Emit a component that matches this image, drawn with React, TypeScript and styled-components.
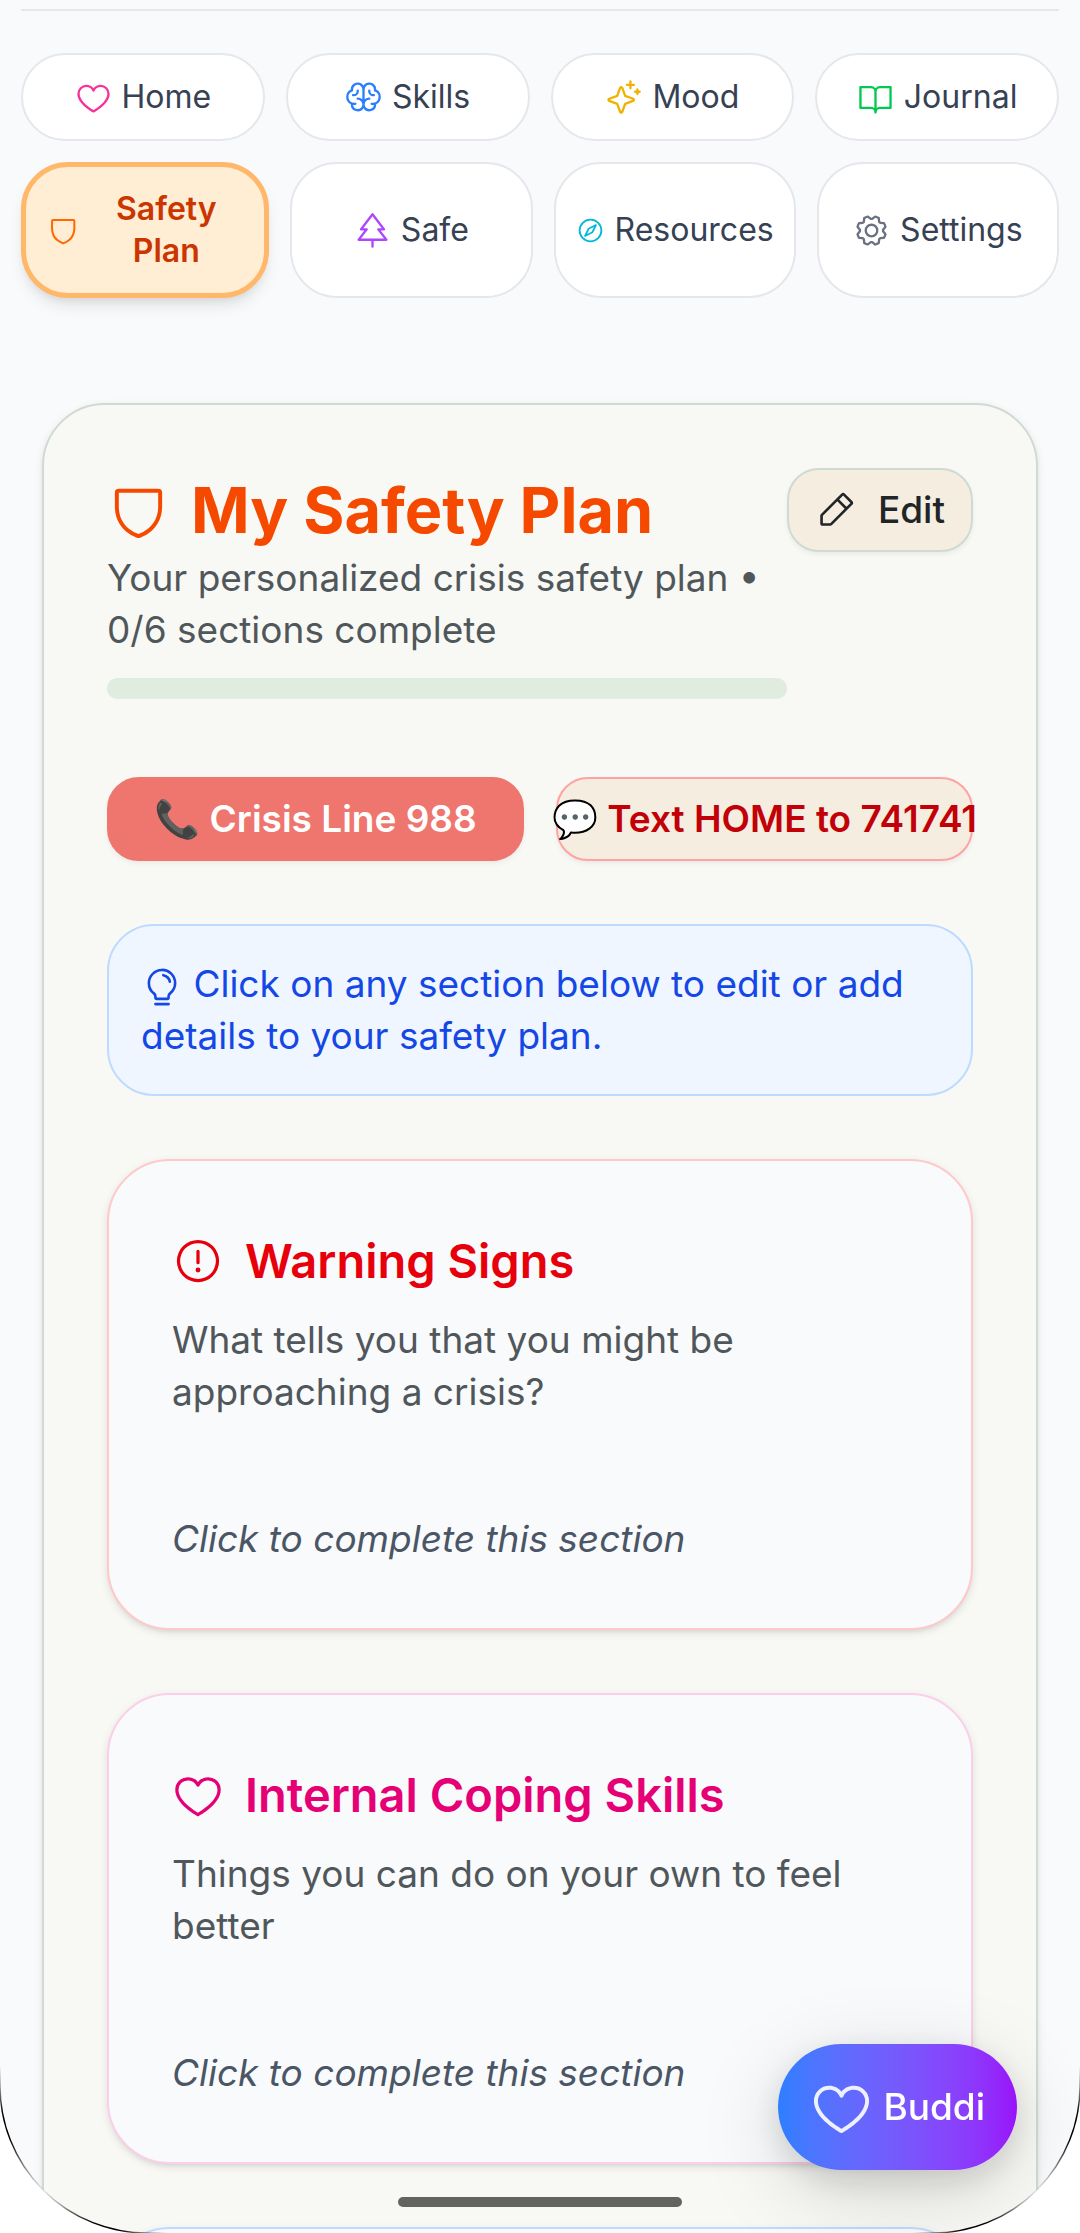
import React from 'react';
import styled, { createGlobalStyle, css } from 'styled-components';
import type { IconType } from 'react-icons';
import {
  PiBookOpen,
  PiBrain,
  PiCompass,
  PiGear,
  PiHeart,
  PiLightbulb,
  PiPencilSimple,
  PiShield,
  PiSparkle,
  PiTreeEvergreen,
  PiWarningCircle,
} from 'react-icons/pi';

const GlobalStyle = createGlobalStyle`
  *, *::before, *::after { box-sizing: border-box; }
  html { background: #ffffff; }
  body {
    margin: 0;
    background: #f9fafc;
    color: #1f2528;
    font-family: Inter, "Liberation Sans", sans-serif;
    font-size: 37px;
    line-height: 52px;
  }
  h1, h2, p { margin: 0; }
  button { font: inherit; color: inherit; cursor: pointer; }
`;

const Screen = styled.div`
  height: 100vh;
  overflow: hidden;
`;

const TopBar = styled.header`
  margin: 0 21px;
  padding-top: 9px;
  border-bottom: 2px solid #e5e7eb;
`;

const Nav = styled.nav`
  display: grid;
  gap: 21px;
  padding: 42px 21px 0;
`;

const NavRow = styled.div`
  display: flex;
  gap: 21px;
`;

const NavButton = styled.button<{ $active?: boolean }>`
  flex: 1 1 0;
  min-width: 0;
  display: flex;
  align-items: center;
  justify-content: center;
  gap: 10px;
  padding: 21px;
  border: 2px solid #e5e7eb;
  border-radius: 47px;
  background: #ffffff;
  color: #364153;
  font-size: 32px;
  line-height: 42px;

  ${({ $active }) =>
    $active &&
    css`
      border: 5px solid #ffb86a;
      background: #ffedd4;
      color: #ca3500;
      font-weight: 600;
      box-shadow: 0 10px 16px -3px rgba(0, 0, 0, 0.1), 0 5px 10px -5px rgba(0, 0, 0, 0.1);
    `}
`;

const NavIcon = styled.span<{ $color: string }>`
  display: flex;
  flex: 0 1 37px;
  min-width: 29px;
  color: ${({ $color }) => $color};

  svg {
    width: 100%;
    height: auto;
  }
`;

const Main = styled.main`
  padding: 105px 42px 0;
`;

const PlanCard = styled.section`
  display: grid;
  gap: 63px;
  padding: 63px;
  border: 2px solid #cfdbd2;
  border-radius: 63px;
  background: #f8f9f4;
  box-shadow: 0 3px 8px rgba(0, 0, 0, 0.1), 0 3px 5px -3px rgba(0, 0, 0, 0.1);
`;

const PlanHeader = styled.div`
  display: flex;
  align-items: flex-start;
  padding-bottom: 15px;
`;

const PlanSummary = styled.div`
  flex: 1;
  min-width: 0;
`;

const PlanTitle = styled.h1`
  display: flex;
  align-items: center;
  gap: 21px;
  color: #f54900;
  font-size: 63px;
  font-weight: 700;
  line-height: 84px;
`;

const Muted = styled.p`
  color: #50575b;
`;

const Progress = styled.div`
  height: 21px;
  margin-top: 22px;
  border-radius: 10px;
  background: #e1ece0;
  overflow: hidden;
`;

const ProgressFill = styled.div`
  height: 100%;
  background: #7fb08a;
`;

const Button = styled.button<{ $tone?: 'solid' | 'danger' }>`
  display: flex;
  align-items: center;
  justify-content: center;
  height: 84px;
  padding: 0 26px;
  border: 2px solid #cfdbd2;
  border-radius: 32px;
  background: #f5ede0;
  font-weight: 500;
  white-space: nowrap;
  box-shadow: 0 3px 5px rgba(0, 0, 0, 0.05);

  svg {
    margin-right: 21px;
  }

  ${({ $tone }) =>
    $tone === 'solid' &&
    css`
      border-color: #ee766e;
      background: #ee766e;
      color: #ffffff;
      font-weight: 600;
    `}

  ${({ $tone }) =>
    $tone === 'danger' &&
    css`
      border-color: #ffa2a2;
      color: #c10007;
      font-weight: 600;
    `}
`;

const CrisisRow = styled.div`
  display: grid;
  grid-template-columns: minmax(0, 1fr) minmax(0, 1fr);
  gap: 32px;
`;

const Hint = styled.p`
  padding: 32px;
  border: 2px solid #bedbff;
  border-radius: 47px;
  background: #eff6ff;
  color: #1447e6;

  svg {
    vertical-align: middle;
  }
`;

const SectionCard = styled.article<{ $border: string }>`
  min-height: 471px;
  padding: 63px;
  border: 2px solid ${({ $border }) => $border};
  border-radius: 63px;
  background: #f9fafc;
  box-shadow: 0 3px 8px rgba(0, 0, 0, 0.1), 0 3px 5px -3px rgba(0, 0, 0, 0.1);
  cursor: pointer;
`;

const SectionTitle = styled.h2<{ $color: string }>`
  display: flex;
  align-items: center;
  gap: 21px;
  margin-bottom: 16px;
  color: ${({ $color }) => $color};
  font-size: 47px;
  font-weight: 600;
  line-height: 74px;
`;

const Placeholder = styled.p`
  margin-top: 95px;
  color: #4a5565;
  font-style: italic;
`;

const BuddiButton = styled.button`
  position: fixed;
  right: 63px;
  bottom: 63px;
  display: flex;
  align-items: center;
  gap: 10px;
  height: 126px;
  padding: 0 32px;
  border: 0;
  border-radius: 63px;
  background: linear-gradient(to right in oklab, #2b7fff, #9810fa);
  color: #ffffff;
  font-weight: 500;
  box-shadow: 0 21px 84px rgba(0, 0, 0, 0.15), 0 10px 32px rgba(0, 0, 0, 0.12);

  svg {
    opacity: 0.9;
  }
`;

const HomeIndicator = styled.div`
  position: fixed;
  bottom: 26px;
  left: 50%;
  width: 284px;
  height: 10px;
  margin-left: -142px;
  border-radius: 5px;
  background: #636462;
`;

const Corner = styled.svg<{ $side: 'left' | 'right' }>`
  position: fixed;
  bottom: 0;
  ${({ $side }) => $side}: 0;
  width: 167px;
  height: 167px;
  pointer-events: none;
  ${({ $side }) => $side === 'right' && 'transform: scaleX(-1);'}
`;

function ScreenCorner({ side }: { side: 'left' | 'right' }) {
  const id = `edge-${side}`;
  return (
    <Corner $side={side} viewBox="0 0 167 167" aria-hidden="true">
      <defs>
        <linearGradient id={id} x1="0" y1="0" x2="1" y2="1">
          <stop offset="0" stopColor="#000" stopOpacity="0" />
          <stop offset="0.15" stopColor="#000" />
          <stop offset="0.25" stopColor="#000" />
          <stop offset="0.42" stopColor="#000" stopOpacity="0.3" />
          <stop offset="0.5" stopColor="#000" stopOpacity="0.08" />
          <stop offset="0.58" stopColor="#000" stopOpacity="0.3" />
          <stop offset="0.75" stopColor="#000" />
          <stop offset="0.85" stopColor="#000" />
          <stop offset="1" stopColor="#000" stopOpacity="0" />
        </linearGradient>
      </defs>
      <path d="M0 20A147 147 0 0 0 147 167H0Z" fill="#fff" />
      <path d="M0 0V20A147 147 0 0 0 147 167H167" fill="none" stroke={`url(#${id})`} strokeWidth="1.4" />
    </Corner>
  );
}

type NavItem = { label: string; icon: IconType; color: string; active?: boolean };

const navRows: NavItem[][] = [
  [
    { label: 'Home', icon: PiHeart, color: '#f6339a' },
    { label: 'Skills', icon: PiBrain, color: '#2b7fff' },
    { label: 'Mood', icon: PiSparkle, color: '#f0b100' },
    { label: 'Journal', icon: PiBookOpen, color: '#00c950' },
  ],
  [
    { label: 'Safety Plan', icon: PiShield, color: '#ff6900', active: true },
    { label: 'Safe', icon: PiTreeEvergreen, color: '#ad46ff' },
    { label: 'Resources', icon: PiCompass, color: '#00b8db' },
    { label: 'Settings', icon: PiGear, color: '#6a7282' },
  ],
];

const sections = [
  {
    title: 'Warning Signs',
    text: 'What tells you that you might be approaching a crisis?',
    icon: PiWarningCircle,
    color: '#e7000b',
    border: '#ffc9c9',
  },
  {
    title: 'Internal Coping Skills',
    text: 'Things you can do on your own to feel better',
    icon: PiHeart,
    color: '#e60076',
    border: '#fccee8',
  },
];

export default function App() {
  const completed = 0;

  return (
    <>
      <GlobalStyle />
      <Screen>
        <TopBar />
        <Nav aria-label="Main">
          {navRows.map((row, index) => (
            <NavRow key={index}>
              {row.map(({ label, icon: Icon, color, active }) => (
                <NavButton key={label} type="button" $active={active} aria-current={active ? 'page' : undefined}>
                  <NavIcon $color={color}>
                    <Icon />
                  </NavIcon>
                  <span>{label}</span>
                </NavButton>
              ))}
            </NavRow>
          ))}
        </Nav>

        <Main>
          <PlanCard>
            <PlanHeader>
              <PlanSummary>
                <PlanTitle>
                  <PiShield size={63} />
                  My Safety Plan
                </PlanTitle>
                <Muted>Your personalized crisis safety plan • {completed}/6 sections complete</Muted>
                <Progress role="progressbar" aria-label="Sections complete" aria-valuemin={0} aria-valuemax={6} aria-valuenow={completed}>
                  <ProgressFill style={{ width: `${(completed / 6) * 100}%` }} />
                </Progress>
              </PlanSummary>
              <Button type="button">
                <PiPencilSimple size={42} />
                Edit
              </Button>
            </PlanHeader>

            <CrisisRow>
              <Button type="button" $tone="solid">📞 Crisis Line 988</Button>
              <Button type="button" $tone="danger">💬 Text HOME to 741741</Button>
            </CrisisRow>

            <Hint>
              <PiLightbulb size={42} /> Click on any section below to edit or add details to your safety plan.
            </Hint>

            {sections.map(({ title, text, icon: Icon, color, border }) => (
              <SectionCard key={title} $border={border}>
                <SectionTitle $color={color}>
                  <Icon size={52} />
                  {title}
                </SectionTitle>
                <Muted>{text}</Muted>
                <Placeholder>Click to complete this section</Placeholder>
              </SectionCard>
            ))}
            <SectionCard $border="#bedbff" />
          </PlanCard>
        </Main>
      </Screen>

      <BuddiButton type="button">
        <PiHeart size={63} />
        Buddi
      </BuddiButton>
      <HomeIndicator />
      <ScreenCorner side="left" />
      <ScreenCorner side="right" />
    </>
  );
}
